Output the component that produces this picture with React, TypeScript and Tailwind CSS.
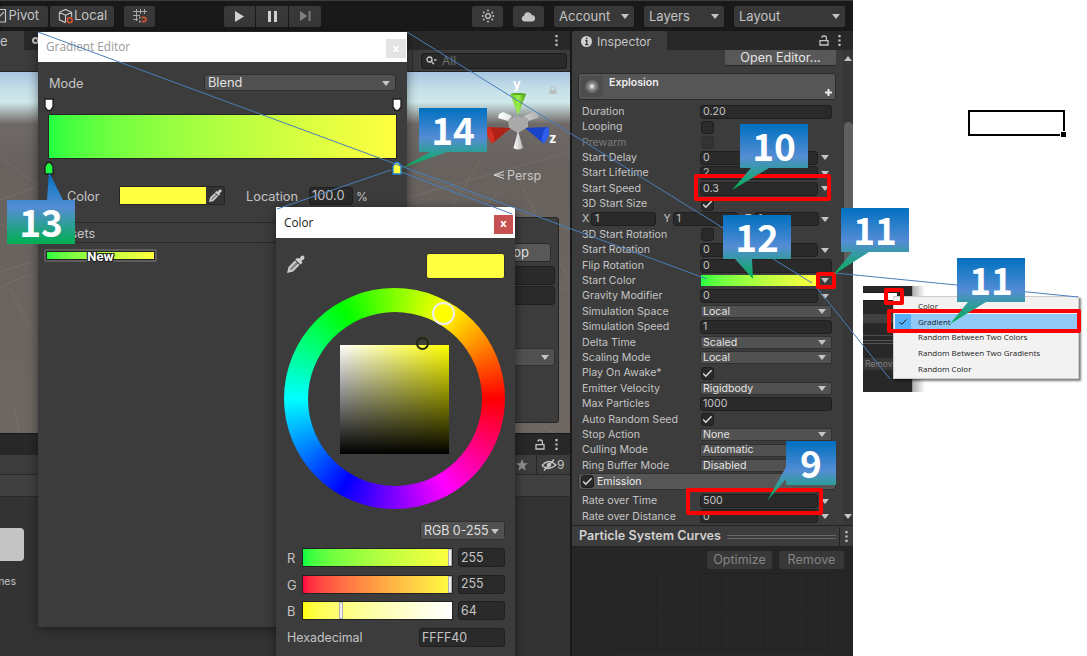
import type { ReactNode } from "react"
import { clsx } from "clsx"

type FieldKind = "field" | "curve" | "check" | "select" | "vector" | "gradient"

interface Property {
    label: string
    kind: FieldKind
    value?: string
    checked?: boolean
    disabled?: boolean
}

const MAIN_MODULE: Property[] = [
    { label: "Duration", kind: "field", value: "0.20" },
    { label: "Looping", kind: "check" },
    { label: "Prewarm", kind: "check", disabled: true },
    { label: "Start Delay", kind: "curve", value: "0" },
    { label: "Start Lifetime", kind: "curve", value: "2" },
    { label: "Start Speed", kind: "curve", value: "0.3" },
    { label: "3D Start Size", kind: "check", checked: true },
    { label: "", kind: "vector" },
    { label: "3D Start Rotation", kind: "check" },
    { label: "Start Rotation", kind: "curve", value: "0" },
    { label: "Flip Rotation", kind: "field", value: "0" },
    { label: "Start Color", kind: "gradient" },
    { label: "Gravity Modifier", kind: "curve", value: "0" },
    { label: "Simulation Space", kind: "select", value: "Local" },
    { label: "Simulation Speed", kind: "field", value: "1" },
    { label: "Delta Time", kind: "select", value: "Scaled" },
    { label: "Scaling Mode", kind: "select", value: "Local" },
    { label: "Play On Awake*", kind: "check", checked: true },
    { label: "Emitter Velocity", kind: "select", value: "Rigidbody" },
    { label: "Max Particles", kind: "field", value: "1000" },
    { label: "Auto Random Seed", kind: "check", checked: true },
    { label: "Stop Action", kind: "select", value: "None" },
    { label: "Culling Mode", kind: "select", value: "Automatic" },
    { label: "Ring Buffer Mode", kind: "select", value: "Disabled" },
]

const EMISSION_MODULE: Property[] = [
    { label: "Rate over Time", kind: "curve", value: "500" },
    { label: "Rate over Distance", kind: "curve", value: "0" },
]

const CHANNELS = [
    { name: "R", value: 255, bar: "bg-linear-to-r from-[#00ff40] to-[#ffff40]" },
    { name: "G", value: 255, bar: "bg-linear-to-r from-[#ff0040] to-[#ffff40]" },
    { name: "B", value: 64, bar: "bg-linear-to-r from-[#ffff00] to-[#ffffff]" },
]

const MENU_ITEMS = ["Color", "Gradient", "Random Between Two Colors", "Random Between Two Gradients", "Random Color"]

function Caret({ className }: { className?: string }) {
    return (
        <svg viewBox="0 0 8 5" className={clsx("h-[5px] w-2 shrink-0 fill-[#c4c4c4]", className)}>
            <path d="M0 0h8L4 5z" />
        </svg>
    )
}

function Kebab({ className }: { className?: string }) {
    return (
        <svg viewBox="0 0 3 11" className={clsx("h-[11px] w-[3px] shrink-0 fill-[#c4c4c4]", className)}>
            <path d="M.4 0h2.2v2.2H.4zM.4 4.4h2.2v2.2H.4zM.4 8.8h2.2V11H.4z" />
        </svg>
    )
}

function Unlock({ className }: { className?: string }) {
    return (
        <svg viewBox="0 0 10 11" className={clsx("h-[11px] w-[10px] shrink-0 fill-none stroke-[#c4c4c4]", className)}>
            <path d="M1 5.6h8v4.4H1zM7.4 5.6V2.8Q7.4 1 5.6 1H4.6Q3 1 2.8 2.6" strokeWidth="1.3" />
        </svg>
    )
}

function Check() {
    return (
        <svg viewBox="0 0 11 9" className="h-[9px] w-[11px] fill-none stroke-[#e0e0e0]">
            <path d="M1.2 4.6l2.6 2.7L9.6 1.2" strokeWidth="1.4" />
        </svg>
    )
}

function Pipette({ className }: { className?: string }) {
    return (
        <svg viewBox="0 0 18 18" className={clsx("shrink-0", className)}>
            <path d="M9.600 3.600l1.400-.8 1.400 1 1.600-2.600q2-1.200 3 0t0 3l-2.600 1.600 1 1.400-.8 1.600-1.200.6-5.200-5z" fill="#cdcdcd" />
            <path d="M8.600 6.200L2.400 12.400 1.400 16.600 5.600 15.600 11.800 9.400" fill="#8a8a8a" stroke="#cdcdcd" strokeWidth="2" />
        </svg>
    )
}

function ToolButton({ className, children }: { className?: string; children: ReactNode }) {
    return (
        <div className={clsx("flex h-[21px] shrink-0 items-center rounded-[2px] bg-[#383838]", className)}>{children}</div>
    )
}

function TopToolbar() {
    return (
        <div className="flex h-[31px] shrink-0 items-center border-t border-[#3c3c3c] bg-[#191919] text-[13px] text-[#c4c4c4]">
            <ToolButton className="w-12 pr-[9px] justify-end">
                <svg viewBox="0 0 10 16" className="h-4 w-[10px] shrink-0 fill-none stroke-[#c4c4c4]">
                    <path d="M0 1.500h7.500v12.500H0M0 10l6-6" strokeWidth="1.200" />
                </svg>
                Pivot
            </ToolButton>
            <ToolButton className="ml-[2px] w-16 pl-2">
                <svg viewBox="0 0 17 17" className="h-[17px] w-[16px] shrink-0 fill-none stroke-[#c4c4c4]">
                    <path d="M8 15L1.500 12V4L8 1l6.500 3v5M1.500 4L8 7.200 14.500 4M8 7.200V15" strokeWidth="1.2" />
                    <circle cx="12.500" cy="12.500" r="2.600" stroke="#e0562d" strokeWidth="1.500" />
                </svg>
                Local
            </ToolButton>
            <ToolButton className="ml-[10px] w-[31px] justify-center bg-[#2c2c2c]">
                <svg viewBox="0 0 16 16" className="h-4 w-4 fill-none stroke-[#a8a8a8]">
                    <path d="M4.500 1v12M8.500 1v5M12.500 1v5M1 3.500h14M1 7.500h7M1 11.500h5" />
                    <path d="M7 9.500h1.500M7 13.500h1.500" strokeWidth="2" />
                    <path d="M9.500 9.500h2.500a2 2 0 0 1 0 4H9.500" stroke="#c0522f" strokeWidth="1.800" />
                </svg>
            </ToolButton>
            <ToolButton className="ml-[69px] w-[31px] justify-center rounded-r-none">
                <svg viewBox="0 0 10 12" className="h-[11px] w-[9px] fill-[#d0d0d0]">
                    <path d="M0 0l10 6L0 12z" />
                </svg>
            </ToolButton>
            <ToolButton className="ml-px w-8 justify-center rounded-none">
                <svg viewBox="0 0 9 11" className="h-[11px] w-[9px] fill-[#d0d0d0]">
                    <path d="M0 0h3v11H0zM6 0h3v11H6z" />
                </svg>
            </ToolButton>
            <ToolButton className="ml-px w-8 justify-center rounded-l-none bg-[#2c2c2c]">
                <svg viewBox="0 0 12 11" className="h-[10px] w-[11px] fill-[#808080]">
                    <path d="M0 0l8 5.500L0 11zM9.500 0h2v11h-2z" />
                </svg>
            </ToolButton>
            <div className="mr-2 flex grow justify-end gap-[10px]">
                <ToolButton className="w-[31px] justify-center">
                    <svg viewBox="0 0 14 14" className="h-[14px] w-[14px] fill-none stroke-[#c4c4c4]">
                        <circle cx="7" cy="7" r="2.400" strokeWidth="1.300" />
                        <path d="M7 .8v1.400M7 11.800v1.400M1 7h1.400M11.600 7H13M2.300 3l1 1M10.700 10l1 1M2.300 11l1-1M10.700 4l1-1" strokeWidth="1.800" />
                    </svg>
                </ToolButton>
                <ToolButton className="w-[31px] justify-center">
                    <svg viewBox="0 0 16 12" className="h-[11px] w-[15px] fill-[#c4c4c4]">
                        <path d="M3.500 11.500a3.200 3.200 0 0 1-.4-6.300 4.400 4.400 0 0 1 8.500-.8 3.600 3.600 0 0 1 .8 7.100z" />
                    </svg>
                </ToolButton>
                <ToolButton className="w-20 justify-between pt-px pl-[5px] pr-[5px]">Account<Caret /></ToolButton>
                <ToolButton className="w-20 justify-between pt-px pl-[5px] pr-[5px]">Layers<Caret /></ToolButton>
                <ToolButton className="w-[111px] justify-between pt-px pl-[5px] pr-[5px]">Layout<Caret /></ToolButton>
            </div>
        </div>
    )
}

function Gizmo() {
    return (
        <svg viewBox="0 0 92 118" className="absolute top-0 right-[-2px] h-[118px] w-[92px]">
            <defs>
                <linearGradient id="cone">
                    <stop stopColor="#ffffff" />
                    <stop offset="1" stopColor="#b4b4b4" />
                </linearGradient>
                <linearGradient id="coneUp">
                    <stop stopColor="#6fc822" />
                    <stop offset=".5" stopColor="#9bf046" />
                    <stop offset="1" stopColor="#4c9a10" />
                </linearGradient>
            </defs>
            <path d="M19 42l4-2 9 4-4 5-10-3zM58 42l-4-2-10 4 4 5 10-3z" fill="url(#cone)" />
            <path d="M28 48l8-4 12 2v9l-10 6-9-5z" fill="#a9a9a9" />
            <path d="M38 43L30.500 22q7.500-2 15.500 0z" fill="url(#coneUp)" />
            <path d="M30.500 22q7.500-2 15.500 0-8 2-15.500 0" fill="#5aa51f" />
            <path d="M38 59l5 17q-5 3-9.500 0z" fill="url(#cone)" />
            <path d="M31 56L9 55q-3 7 4 16z" fill="#b02217" />
            <ellipse cx="10.500" cy="63" rx="3" ry="8.500" transform="rotate(-16 10.500 63)" fill="#d32f20" />
            <path d="M45 56l22-1q3 7-4 16z" fill="#1a42c8" />
            <ellipse cx="65.500" cy="63" rx="3" ry="8.500" transform="rotate(16 65.500 63)" fill="#2e5eee" />
            <path d="M69.500 18h7v4h-7z" fill="#b9c0c0" />
            <path d="M71 18v-3h4v3" fill="none" stroke="#b9c0c0" />
            <path d="M24 99.500l-10 3.500 10 3.500M24 103H14" fill="none" stroke="#d8d8d8" />
            <text x="33" y="17" className="fill-white text-[13px] font-bold">y</text>
            <text x="69" y="71" className="fill-white text-[13px] font-bold">z</text>
            <text x="27" y="107.500" className="fill-[#c8c8c8] text-[12.5px]">Persp</text>
        </svg>
    )
}

function SceneView() {
    return (
        <div className="flex h-[402px] shrink-0 flex-col">
            <div className="flex h-[19px] shrink-0 items-center bg-[#282828]">
                <div className="flex h-full w-6 items-center bg-[#3c3c3c] pt-[3px] text-[13px]">e</div>
                <div className="ml-[8px] h-[7px] w-[7px] rounded-full border-2 border-[#c4c4c4]" />
                <Kebab className="mr-[12px] ml-auto" />
            </div>
            <div className="flex h-[22px] shrink-0 items-center justify-end border-b border-[#232323] bg-[#3c3c3c] pr-[3px]">
                <div className="mr-[8px] h-full w-px bg-[#2a2a2a]" />
                <div className="flex h-4 w-[146px] items-center rounded-[3px] border border-[#1c1c1c] bg-[#2a2a2a] pl-1 text-[12px] text-[#707070]">
                    <svg viewBox="0 0 11 9" className="mr-[5px] h-[9px] w-[11px] fill-none stroke-[#c4c4c4]">
                        <circle cx="3.500" cy="3.500" r="2.500" strokeWidth="1.400" />
                        <path d="M5.500 5.500l2.500 2.800M8 4h2.500" strokeWidth="1.400" />
                    </svg>
                    All
                </div>
            </div>
            <div className="relative grow overflow-hidden bg-[linear-gradient(#a9c6e1_0,#c6e0e8_18px,#cfe9ea_30px,#a5b0b0_40px,#6e6967_52px,#68625f_90px,#6d6661_361px)]">
                <svg viewBox="0 0 570 361" className="absolute inset-0 fill-none stroke-[#8a8480] opacity-35">
                    <path d="M0 85l38 28M0 128l38-14M0 152l38 28M0 200l38-12M0 215l38-16M10 215l28 56M14 334l8 40M410 100l162 60M410 125l160-45M480 88l-70 120M410 150l162 70M500 120l-100 88M520 110l50 100M530 345l30 20" />
                </svg>
                {/* Particle effect overlay */}
                <div className="absolute top-[145px] right-[11px] flex h-[206px] w-[140px] flex-col items-end rounded-[3px] border border-[#262626] bg-[#3c3c3c] pr-[3px] text-[13px]">
                    <div className="mt-[25px] mr-1 flex h-[19px] w-[72px] items-center justify-end rounded-[3px] border border-[#2a2a2a] bg-[#585858] pr-[21px] text-[#e0e0e0]">Stop</div>
                    <div className="mt-[4px] h-[19px] w-20 rounded-[3px] border border-[#202020] bg-[#2a2a2a]" />
                    <div className="mt-px h-[19px] w-20 rounded-[3px] border border-[#202020] bg-[#2a2a2a]" />
                    <div className="mt-[43px] flex h-[18px] w-20 items-center justify-end rounded-[3px] border border-[#303030] bg-[#515151] pr-[5px]"><Caret /></div>
                </div>
                <Gizmo />
            </div>
        </div>
    )
}

function ProjectPanel() {
    return (
        <div className="flex grow flex-col border-t border-[#191919] bg-[#333333]">
            <div className="flex h-5 items-center justify-end gap-[10px] bg-[#282828] pr-[12px]">
                <Unlock />
                <Kebab />
            </div>
            <div className="flex h-[21px] items-center justify-end border-y border-[#282828] bg-[#3c3c3c] text-[12px]">
                <svg viewBox="0 0 12 12" className="mr-2 h-[12px] w-[12px] fill-[#909090]">
                    <path d="M6 0l1.600 4.200H12L8.500 7l1.300 4.700L6 9 2.200 11.700 3.500 7 0 4.200h4.400z" />
                </svg>
                <div className="flex h-full w-[34px] items-center border-l border-[#282828] pl-1">
                    <svg viewBox="0 0 16 12" className="h-[12px] w-4 shrink-0 fill-none stroke-[#c4c4c4]">
                        <path d="M1 6.500Q7.500-1 15 6Q7.500 12.500 1 6.500M3 11.500L13 .5" strokeWidth="1.500" />
                        <circle cx="8" cy="6" r="1.800" fill="#c4c4c4" />
                    </svg>
                    9
                </div>
            </div>
            <div className="h-[22px] border-b border-[#2a2a2a] bg-[#404040]" />
            <div className="mt-[31px] h-[33px] w-6 rounded-r-[4px] bg-[#c4c4c4]" />
            <div className="mt-[13px] flex w-4 justify-end text-[10.500px]">nes</div>
        </div>
    )
}

function InputBox({ className, children }: { className?: string; children?: ReactNode }) {
    return (
        <div className={clsx("flex items-center rounded-[3px] border border-[#1f1f1f] bg-[#2a2a2a]", className)}>{children}</div>
    )
}

function Vector() {
    return (
        <>
            {["X", "Y", "Z"].map((axis) => (
                <div key={axis} className="flex w-[81.5px] items-center">
                    <span className="w-[9px]">{axis}</span>
                    <InputBox className="h-[14px] w-[65px] pl-[3px]">1</InputBox>
                </div>
            ))}
            <Caret className="-ml-[6px]" />
        </>
    )
}

function PropertyRow({ label, kind, value, checked, disabled }: Property) {
    if (kind === "vector") {
        return <div className="flex h-[15.4px] shrink-0 items-center"><Vector /></div>
    }
    return (
        <div className={clsx("flex h-[15.4px] shrink-0 items-center", disabled && "opacity-45")}>
            <span className="w-[118px] shrink-0 whitespace-nowrap">{label}</span>
            {kind === "field" && <InputBox className="h-[14px] w-[132px] pl-[2px]">{value}</InputBox>}
            {kind === "curve" && (
                <>
                    <InputBox className="h-[14px] w-[118px] pl-[2px]">{value}</InputBox>
                    <Caret className="ml-[3px]" />
                </>
            )}
            {kind === "check" && (
                <InputBox className="ml-px h-[13px] w-[13px] justify-center">{checked && <Check />}</InputBox>
            )}
            {kind === "select" && (
                <div className="flex h-[13px] w-[132px] items-center justify-between rounded-[2px] border border-[#303030] bg-[#515151] pr-[5px] pl-[2px] text-[#e4e4e4]">
                    {value}
                    <Caret />
                </div>
            )}
            {kind === "gradient" && (
                <>
                    <div className="ml-px h-[11px] w-[117px] bg-linear-to-r from-[#20ff40] to-[#ffff40]" />
                    <Caret className="ml-[3px]" />
                </>
            )}
        </div>
    )
}

function Inspector() {
    return (
        <div className="flex w-[281px] shrink-0 flex-col bg-[#3c3c3c]">
            <div className="flex h-[19px] shrink-0 items-center bg-[#282828]">
                <div className="flex h-full w-[95px] items-center gap-[5px] rounded-t-[3px] bg-[#3c3c3c] pt-[3px] pl-[9px] text-[12.200px]">
                    <svg viewBox="0 0 11 11" className="mb-px h-[11px] w-[11px] shrink-0">
                        <circle cx="5.500" cy="5.500" r="5.500" fill="#d0d0d0" />
                        <path d="M4.300 4.500h1.500V8.300M4 8.600h3.400M5 2.400h1.500" fill="none" stroke="#333" strokeWidth="1.300" />
                    </svg>
                    Inspector
                </div>
                <Unlock className="ml-auto" />
                <Kebab className="mr-[12px] ml-[9px]" />
            </div>
            <div className="flex h-[475px] shrink-0 overflow-hidden">
                <div className="flex w-[264px] flex-col pl-[6px] text-[10.600px]">
                    <div className="ml-auto flex h-4 w-[111px] shrink-0 items-center justify-center rounded-b-[3px] border-b border-[#262626] bg-[#585858] text-[12.600px] leading-[15px] text-[#e4e4e4]">Open Editor...</div>
                    <div className="mt-[7px] flex h-[27px] shrink-0 rounded-[3px] border border-[#2a2a2a] bg-[#565656]">
                        <div className="m-[2px] h-[21px] w-[22px] bg-[radial-gradient(circle,#ffffff_0,#8a8a8a_22%,#4d4d4d_50%)]" />
                        <span className="mt-[2px] ml-1 grow leading-[14px] font-semibold text-[#eeeeee]">Explosion</span>
                        <svg viewBox="0 0 7 7" className="mr-[3px] mt-[15px] h-[7px] w-[7px] fill-[#eeeeee]">
                            <path d="M2.500 0h2v2.500H7v2H4.500V7h-2V4.500H0v-2h2.500z" />
                        </svg>
                    </div>
                    <div className="flex flex-col pt-[4px] pl-1">
                        {MAIN_MODULE.map((property, index) => (
                            <PropertyRow key={index} {...property} />
                        ))}
                    </div>
                    <div className="flex h-[17px] shrink-0 items-center rounded-[3px] border border-[#303030] bg-[#565656] pl-[2px] text-[#eeeeee]">
                        <InputBox className="mr-[3px] h-[13px] w-[13px] justify-center"><Check /></InputBox>
                        Emission
                    </div>
                    <div className="flex flex-col pt-[3px] pl-1">
                        {EMISSION_MODULE.map((property) => (
                            <PropertyRow key={property.label} {...property} />
                        ))}
                    </div>
                </div>
                <div className="ml-[7px] flex w-[10px] flex-col items-center bg-[#373737] pt-[6px]">
                    <Caret className="rotate-180" />
                    <div className="mt-[61px] h-[142px] w-[9px] rounded-full bg-[#5f5f5f]" />
                    <Caret className="mt-auto mb-[6px]" />
                </div>
            </div>
            <div className="flex h-[22px] shrink-0 items-center border-y border-[#232323] pt-px pl-[7px]">
                <span className="text-[12.600px] font-semibold whitespace-nowrap text-[#d2d2d2]">Particle System Curves</span>
                <div className="ml-[6px] h-1 w-[109px] border-y border-[#686868]" />
                <div className="ml-[3px] flex h-full grow items-center border-l border-[#232323]">
                    <Kebab className="ml-[5px]" />
                </div>
            </div>
            <div className="flex grow flex-col bg-[#262626] px-[9px] pt-1">
                <div className="flex justify-end gap-[7px] text-[12.600px] text-[#858585]">
                    <div className="flex h-[18px] w-[65px] items-center justify-center rounded-[3px] bg-[#383838] pt-px">Optimize</div>
                    <div className="flex h-[18px] w-[65px] items-center justify-center rounded-[3px] bg-[#383838] pt-px">Remove</div>
                </div>
                <svg viewBox="0 0 216 76" className="mt-1 ml-8 h-[76px] w-[216px] shrink-0 fill-none stroke-[#222222]">
                    <path d="M.5.5h215v75H.5zM0 38h216M22 0v76M43.500 0v76M65 0v76M86.500 0v76M108 0v76M129.500 0v76M151 0v76M172.500 0v76M194 0v76" />
                </svg>
            </div>
        </div>
    )
}

function Stop({ fill, stroke = "#1e1e1e", up }: { fill: string; stroke?: string; up?: boolean }) {
    return (
        <svg viewBox="0 0 10 14" className={clsx("h-[14px] w-[10px]", up && "rotate-180")}>
            <path d="M1 1h8v8L6.500 12.500h-3L1 9z" fill={fill} stroke={stroke} strokeWidth="1.300" />
        </svg>
    )
}

function GradientEditor() {
    return (
        <div className="absolute top-8 left-[38px] flex h-[595px] w-[369px] flex-col bg-[#3c3c3c] text-[12.800px] shadow-[0_2px_10px_rgba(0,0,0,0.45)]">
            <div className="flex h-[30px] shrink-0 items-center justify-between bg-white pl-2 font-['Open_Sans',sans-serif] text-[11.800px] text-[#999999]">
                Gradient Editor
                <div className="mt-[3px] mr-px flex h-[19px] w-5 items-center justify-center bg-[#e4e4e4] text-[11px] font-bold text-white">x</div>
            </div>
            <div className="mt-3 flex h-[17px] items-center justify-between pr-[11px] pl-[11px]">
                <span className="pt-[3px]">Mode</span>
                <div className="flex h-[17px] w-[192px] items-center justify-between rounded-[3px] border border-[#303030] bg-[#515151] pt-px pr-[5px] pl-[3px] text-[#e0e0e0]">
                    Blend
                    <Caret />
                </div>
            </div>
            <div className="mt-[7px] flex justify-between pr-[5px] pl-[6px]">
                <Stop fill="#ffffff" />
                <Stop fill="#ffffff" />
            </div>
            <div className="mx-[10px] mt-[2px] h-[45px] shrink-0 border border-[#242424] bg-linear-to-r from-[#20ff40] to-[#ffff40]" />
            <div className="mt-[2px] flex justify-between pr-[5px] pl-[6px]">
                <Stop fill="#20ff40" up />
                <Stop fill="#ffff40" stroke="#1e7fd6" up />
            </div>
            <div className="mt-[11px] flex h-[19px] items-center pl-[29px]">
                <span className="w-[52px] pt-[2px]">Color</span>
                <div className="flex h-[19px] w-[106px] items-center rounded-[2px] border border-[#242424] bg-[#333333]">
                    <div className="mr-[3px] h-full w-[86px] bg-[#ffff40]" />
                    <Pipette className="h-[13px] w-[13px]" />
                </div>
                <span className="ml-[21px] w-[63px] pt-[2px]">Location</span>
                <InputBox className="h-[18px] w-[44px] pt-px pl-[2px]">100.0</InputBox>
                <span className="ml-[3px] pt-[2px] text-[12px]">%</span>
            </div>
            <div className="mt-[17px] flex h-[21px] items-center border-y border-[#2a2a2a] pt-[2px] pl-3">Presets</div>
            <div className="mt-[6px] ml-[6px] flex h-[13px] w-[113px] items-center justify-center rounded-[2px] border-[2px] border-[#5c5c5c] bg-[#222222] p-px">
                <div className="flex h-full w-full items-center justify-center bg-linear-to-r from-[#20ff40] to-[#ffff40] pt-[2px] text-[12px] font-bold text-white [text-shadow:1px_1px_0_#222,-1px_-1px_0_#222,1px_-1px_0_#222,-1px_1px_0_#222,1px_0_0_#222,-1px_0_0_#222]">New</div>
            </div>
        </div>
    )
}

function ColorPicker() {
    return (
        <div className="absolute top-[207px] left-[276px] flex h-[470px] w-[239px] flex-col bg-[#3c3c3c] text-[12.800px] shadow-[0_2px_10px_rgba(0,0,0,0.5)]">
            <div className="flex h-[31px] shrink-0 items-center justify-between bg-white pr-[2px] pl-2 font-['Open_Sans',sans-serif] text-[11.800px] text-[#222222]">
                Color
                <div className="mt-[3px] flex h-[19px] w-[19px] items-center justify-center bg-[#c75050] pb-px text-[11px] font-bold text-white">x</div>
            </div>
            <div className="mt-[15px] flex items-center justify-between pr-[10px] pl-[11px]">
                <Pipette className="-mt-1 h-[18px] w-[18px]" />
                <div className="h-[26px] w-[79px] rounded-[3px] border border-[#303030] bg-[#ffff40]" />
            </div>
            <div className="relative mt-[9px] ml-2 flex h-[221px] w-[221px] shrink-0 items-center justify-center rounded-full bg-[conic-gradient(from_90deg,#f00,#f0f,#00f,#0ff,#0f0,#ff0,#f00)]">
                <div className="flex h-[174px] w-[174px] items-center justify-center rounded-full bg-[#3c3c3c]">
                    <div className="mt-px h-[109px] w-[109px] bg-[linear-gradient(to_top,#000,transparent),linear-gradient(to_right,#fff,#ff0)]" />
                </div>
                <div className="absolute top-[14px] left-[148px] h-[23px] w-[23px] rounded-full border-2 border-[#eeeeee] bg-[#ffff00]" />
                <div className="absolute top-[49px] left-[132px] h-[13px] w-[13px] rounded-full border-2 border-[#25250a]" />
            </div>
            <div className="mt-[12px] mr-[10px] ml-auto flex h-[19px] w-[85px] shrink-0 items-center rounded-[3px] border border-[#303030] bg-[#515151] pt-px pl-[3px] text-[12.400px] whitespace-nowrap text-[#e0e0e0]">
                RGB 0-255
                <Caret className="ml-[2px]" />
            </div>
            <div className="mt-[8px] flex flex-col gap-[7.600px] pl-[11px]">
                {CHANNELS.map(({ name, value, bar }) => (
                    <div key={name} className="flex h-[19px] items-center">
                        <span className="w-[15px] pt-[2px]">{name}</span>
                        <div className={clsx("relative h-[19px] w-[151px] border border-[#222222]", bar)}>
                            <div
                                className="absolute top-0 h-full w-1 border border-[#b0b0b0] bg-[#f0f0f0]"
                                style={{ left: `${(value / 255) * 145}px` }}
                            />
                        </div>
                        <InputBox className="ml-[5px] h-[19px] w-[47px] pt-px pl-[2px] text-[12.400px]">{value}</InputBox>
                    </div>
                ))}
            </div>
            <div className="mt-[8px] flex h-[19px] items-center justify-between pr-[10px] pl-[11px]">
                <span className="pt-px text-[12.400px]">Hexadecimal</span>
                <InputBox className="h-[19px] w-[86px] pt-px pl-[2px] text-[12.400px]">FFFF40</InputBox>
            </div>
        </div>
    )
}

function ModeMenu() {
    return (
        <div className="absolute top-[286px] left-[863px] h-[106px] w-[220px] font-['Open_Sans',sans-serif]">
            <div className="flex h-full w-[62px] flex-col bg-linear-to-r from-[#282828] from-79% via-[#b0b0b0] via-80% to-white pt-[6px]">
                <div className="h-[9px] w-[34px] border-y border-[#1c1c1c] bg-white" />
                <div className="mt-[13px] h-[9px] w-[49px] bg-[#404040]" />
                <div className="mt-[12px] h-px w-[49px] bg-[#4c4c4c]" />
                <div className="mt-[4px] h-[4px] w-[49px] border-y border-[#555555]" />
                <div className="mt-[14px] flex h-[12px] w-[49px] items-center bg-[#383838] pl-[2px] font-['Inter',sans-serif] text-[8.500px] text-[#808080]">Remov</div>
            </div>
            <div className="absolute top-[10px] left-[30px] flex h-[83px] w-[186px] flex-col border border-[#cccccc] bg-[#f2f2f2] pt-px text-[8px] text-[#1a1a1a] shadow-[2px_2px_2px_rgba(0,0,0,0.5)]">
                {MENU_ITEMS.map((item) => {
                    const selected = item === "Gradient"
                    return (
                        <div key={item} className={clsx("mx-px flex h-[15.800px] shrink-0 items-center", selected && "bg-[#91c9f7]")}>
                            <div className={clsx("mr-[7px] flex h-full w-4 items-center justify-center", selected && "bg-[#56b0fa]")}>
                                {selected && (
                                    <svg viewBox="0 0 8 6" className="h-[6px] w-2 fill-none stroke-[#1a1a1a]">
                                        <path d="M.5 3l2.200 2.300L7.500.5" />
                                    </svg>
                                )}
                            </div>
                            {item}
                        </div>
                    )
                })}
            </div>
        </div>
    )
}

interface CalloutProps {
    label: string
    id: string
    className: string
    viewBox: string
    shape: string
    textClass: string
}

// Box with a pointer, filled with one gradient over both
function Callout({ label, id, className, viewBox, shape, textClass }: CalloutProps) {
    return (
        <div className={clsx("absolute", className)}>
            <svg viewBox={viewBox} className="absolute inset-0 h-full w-full">
                <defs>
                    <linearGradient id={id} x1="0" y1="0" x2="0" y2="1">
                        <stop stopColor="#0070c0" />
                        <stop offset=".5" stopColor="#548dd4" />
                        <stop offset="1" stopColor="#00b050" />
                    </linearGradient>
                </defs>
                <path d={shape} fill={`url(#${id})`} />
            </svg>
            <div
                className={clsx(
                    "absolute flex h-11 items-center justify-center pb-[2px] font-['Noto_Sans_CJK_JP',sans-serif] text-[37px] leading-none font-bold text-white",
                    textClass
                )}
            >
                {label}
            </div>
        </div>
    )
}

function Highlight({ className }: { className: string }) {
    return <div className={clsx("absolute rounded-[2px] border-[4px] border-[#ff0000]", className)} />
}

function Annotations() {
    return (
        <>
            <svg viewBox="0 0 1087 656" className="absolute inset-0 h-[656px] w-[1087px] fill-none stroke-[#4a7ebb]">
                <path d="M38 32L707 279M407 32L812 283M391 170L277 209M401 172L512 214M835 273L1078 297M817 288L890 379" />
            </svg>
            <Highlight className="top-[174px] left-[694px] h-[27px] w-[137px]" />
            <Highlight className="top-[272px] left-[816px] h-[17px] w-5" />
            <Highlight className="top-[488px] left-[686px] h-[27px] w-[137px]" />
            <Highlight className="top-[309px] left-[887px] h-6 w-[194px]" />
            <Highlight className="top-[288px] left-[884px] h-[17px] w-5" />
            <Callout id="c14" label="14" className="top-[108px] left-[402px] h-[60px] w-[85px]" viewBox="0 0 85 60" shape="M17 0h68v44H45L0 60l28-16H17z" textClass="top-0 right-0 w-[68px]" />
            <Callout id="c10" label="10" className="top-[124px] left-[732px] h-[66px] w-[76px]" viewBox="0 0 76 66" shape="M8 0h68v44H37L0 66l19-22H8z" textClass="top-0 right-0 w-[68px]" />
            <Callout id="c12" label="12" className="top-[215px] left-[723px] h-16 w-[68px]" viewBox="0 0 68 64" shape="M0 0h68v44H29l1 20-18-20H0z" textClass="top-0 right-0 w-[68px]" />
            <Callout id="c11a" label="11" className="top-[208px] left-[833px] h-[67px] w-[76px]" viewBox="0 0 76 67" shape="M8 0h68v44H36L0 67l19-23H8z" textClass="top-0 right-0 w-[68px]" />
            <Callout id="c11b" label="11" className="top-[258px] left-[950px] h-[66px] w-[75px]" viewBox="0 0 75 66" shape="M7 0h68v44H36L0 66l18-22H7z" textClass="top-0 right-0 w-[68px]" />
            <Callout id="c9" label="9" className="top-[441px] left-[767px] h-[60px] w-[69px]" viewBox="0 0 69 60" shape="M19 0h50v44H19v-6L0 60l19-34z" textClass="top-0 right-0 w-[50px]" />
            <Callout id="c13" label="13" className="top-[172px] left-[7px] h-[72px] w-[68px]" viewBox="0 0 68 72" shape="M0 28h40l2-28 14 28h12v44H0z" textClass="bottom-0 left-0 w-[68px]" />
        </>
    )
}

export default function App() {
    return (
        <div className="relative h-[656px] w-[1087px] overflow-hidden bg-white font-['Inter',sans-serif] text-[#c4c4c4]">
            <div className="flex h-full w-[853px] flex-col bg-[#191919]">
                <TopToolbar />
                <div className="flex grow gap-[2px]">
                    <div className="flex w-[570px] shrink-0 flex-col">
                        <SceneView />
                        <ProjectPanel />
                    </div>
                    <Inspector />
                </div>
            </div>

            <GradientEditor />
            <ColorPicker />

            {/* Spreadsheet cell selection */}
            <div className="absolute top-[110px] left-[968px] h-[26px] w-[97px] border-2 border-black">
                <div className="absolute -right-[3px] -bottom-[3px] h-[6px] w-[6px] border-t border-l border-white bg-black" />
            </div>

            <ModeMenu />
            <Annotations />
        </div>
    )
}
